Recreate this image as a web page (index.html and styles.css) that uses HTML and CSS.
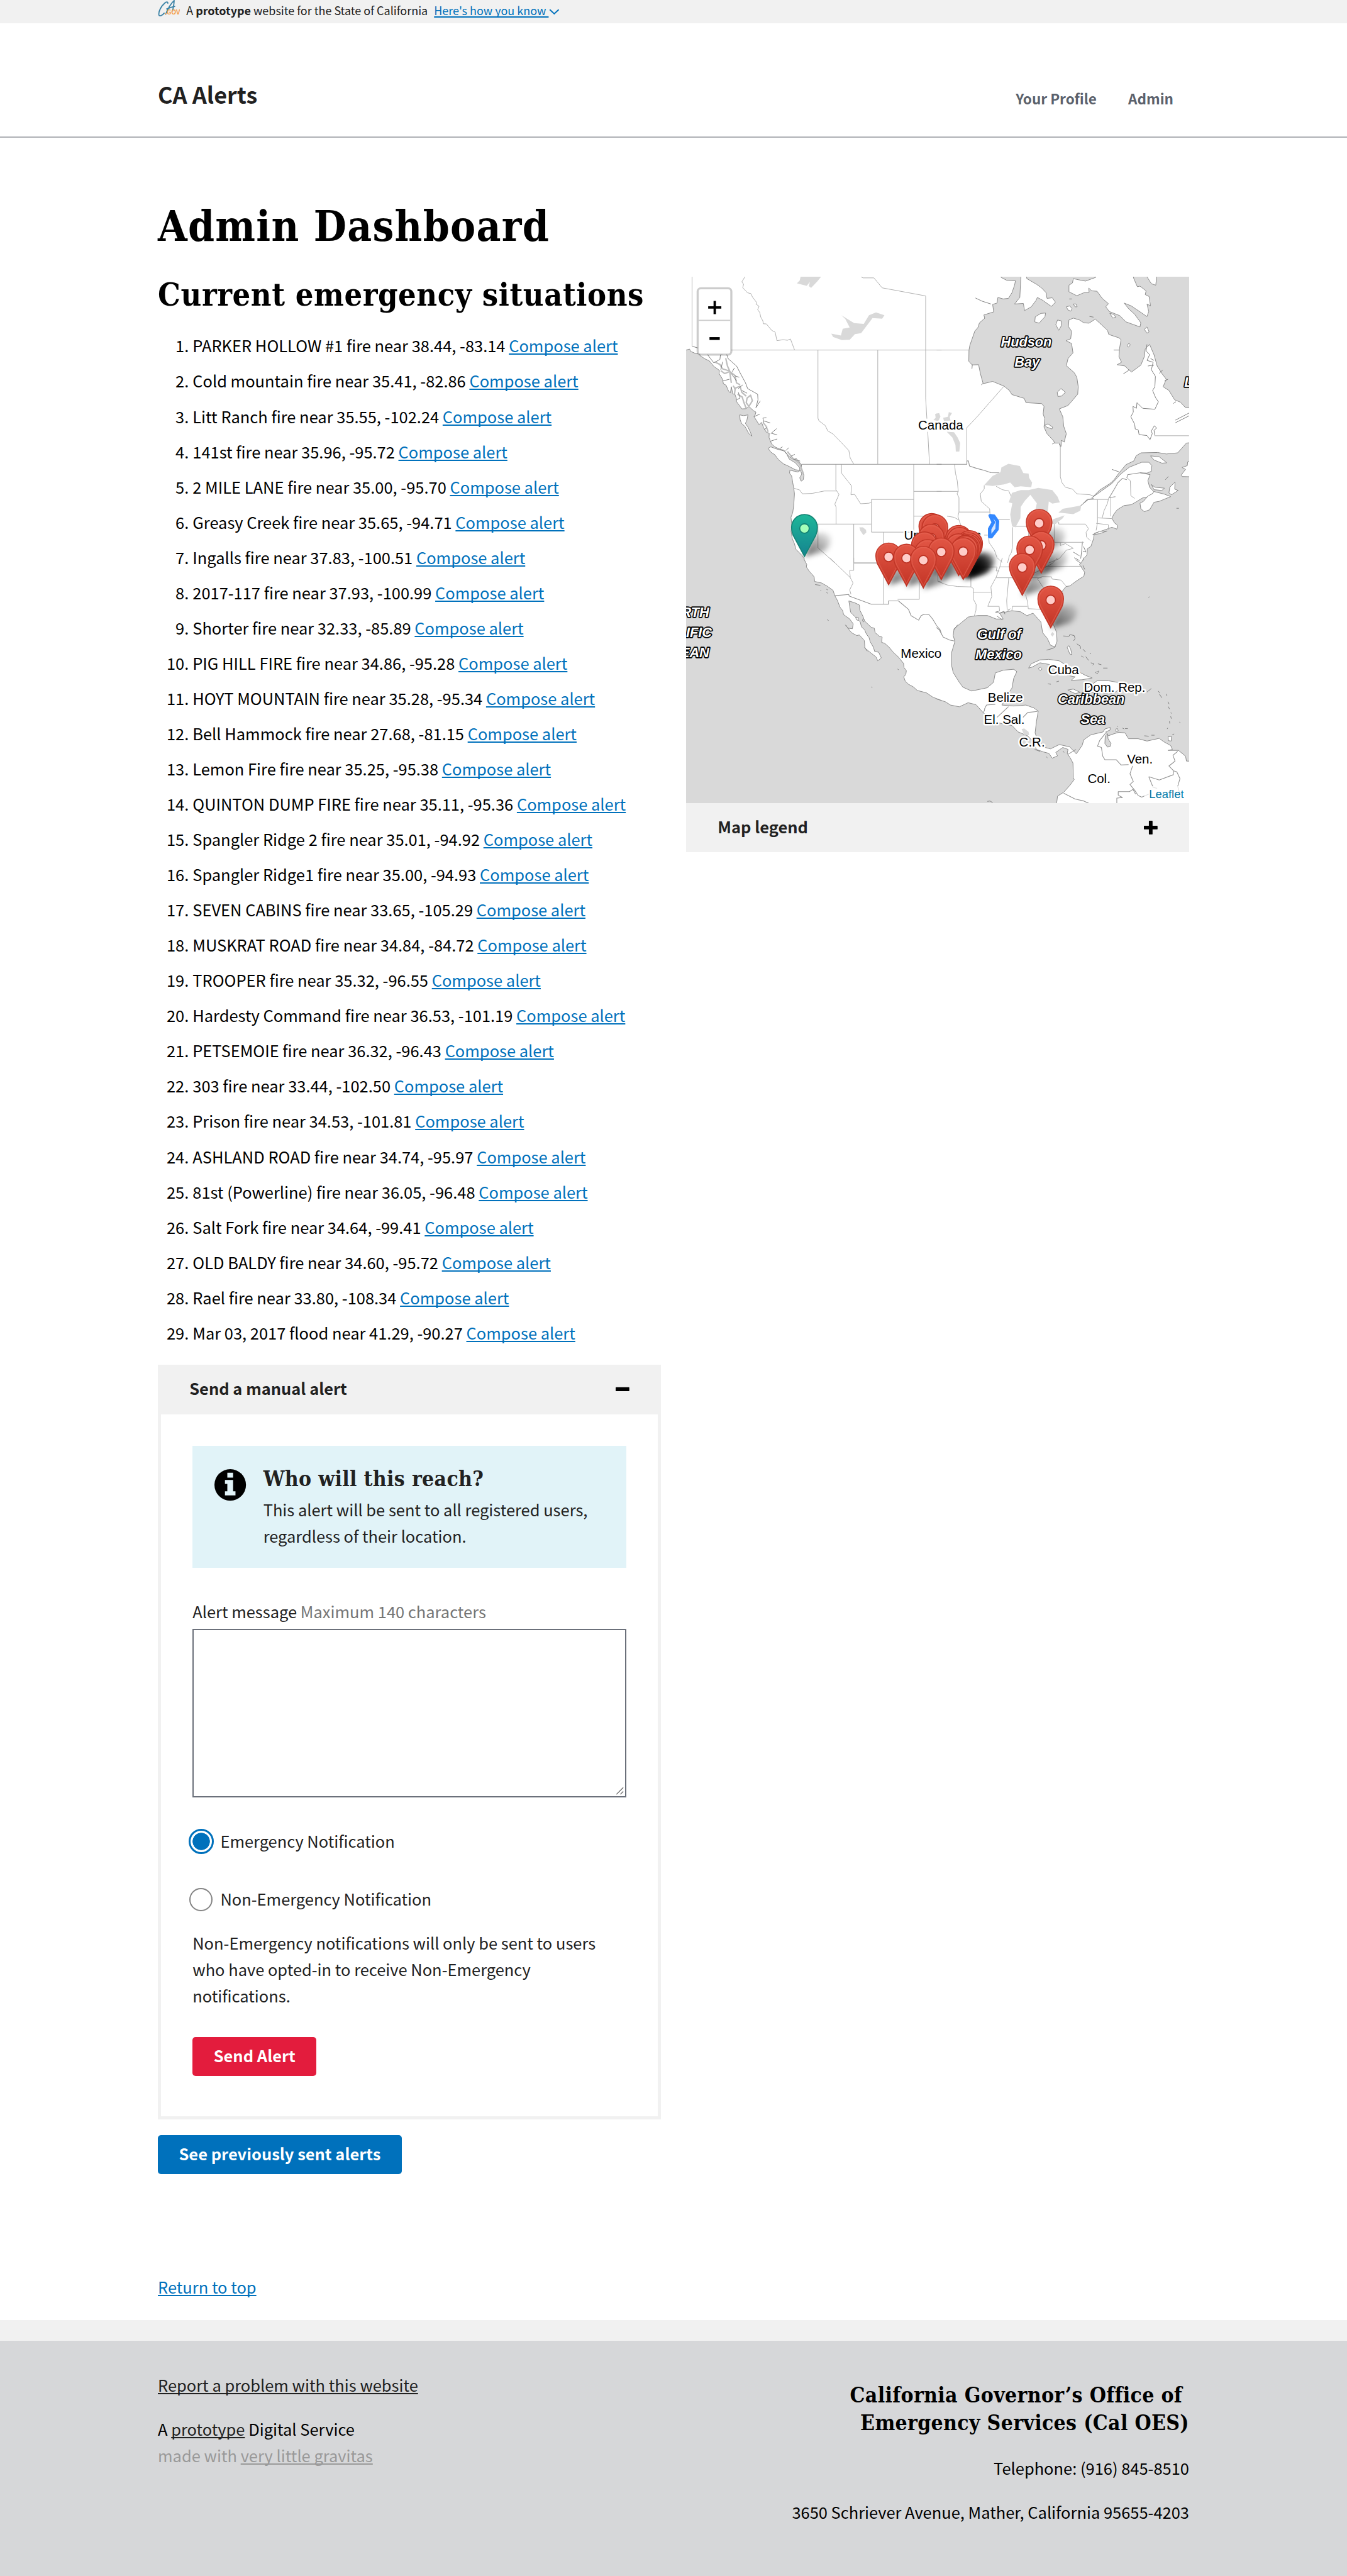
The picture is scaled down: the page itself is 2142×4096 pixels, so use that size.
FILE: index.html
```html
<!DOCTYPE html>
<html lang="en">
<head>
<meta charset="utf-8">
<title>CA Alerts - Admin Dashboard</title>
<link rel="stylesheet" href="styles.css">
</head>
<body>
<div class="banner">
  <div class="container banner-inner">
    <svg class="banner-logo" viewBox="0 0 42 32" aria-hidden="true">
      <path d="M19 6C19 3 16 3 13 6 6 12 1 22 2 28c1 4 6 2 10-3M31 1C25 6 18 18 15 27M31 1c0 8-2 14-3 20M17 17c5-2 9-4 15-5" fill="none" stroke="#3b82a6" stroke-width="2.2" stroke-linecap="round"/>
      <text x="13" y="28" class="logo-gov">.GOV</text>
    </svg>
    <span>A <strong>prototype</strong> website for the State of California</span>
    <a href="#" class="banner-link">Here's how you know </a>
    <svg class="banner-chevron" viewBox="0 0 20 12" aria-hidden="true"><path d="M1.500 1.500l8.500 8 8.500-8" fill="none" stroke="#0071bc" stroke-width="2.400"/></svg>
  </div>
</div>
<header class="header">
  <div class="container header-inner">
    <div class="site-title">CA Alerts</div>
    <nav class="nav"><a href="#">Your Profile</a><a href="#">Admin</a></nav>
  </div>
</header>
<main class="container main">
  <h1>Admin Dashboard</h1>
  <div class="columns">
    <section>
      <h2>Current emergency situations</h2>
      <ol class="events">
        <li>PARKER HOLLOW #1 fire near 38.44, -83.14 <a href="#">Compose alert</a></li>
        <li>Cold mountain fire near 35.41, -82.86 <a href="#">Compose alert</a></li>
        <li>Litt Ranch fire near 35.55, -102.24 <a href="#">Compose alert</a></li>
        <li>141st fire near 35.96, -95.72 <a href="#">Compose alert</a></li>
        <li>2 MILE LANE fire near 35.00, -95.70 <a href="#">Compose alert</a></li>
        <li>Greasy Creek fire near 35.65, -94.71 <a href="#">Compose alert</a></li>
        <li>Ingalls fire near 37.83, -100.51 <a href="#">Compose alert</a></li>
        <li>2017-117 fire near 37.93, -100.99 <a href="#">Compose alert</a></li>
        <li>Shorter fire near 32.33, -85.89 <a href="#">Compose alert</a></li>
        <li>PIG HILL FIRE fire near 34.86, -95.28 <a href="#">Compose alert</a></li>
        <li>HOYT MOUNTAIN fire near 35.28, -95.34 <a href="#">Compose alert</a></li>
        <li>Bell Hammock fire near 27.68, -81.15 <a href="#">Compose alert</a></li>
        <li>Lemon Fire fire near 35.25, -95.38 <a href="#">Compose alert</a></li>
        <li>QUINTON DUMP FIRE fire near 35.11, -95.36 <a href="#">Compose alert</a></li>
        <li>Spangler Ridge 2 fire near 35.01, -94.92 <a href="#">Compose alert</a></li>
        <li>Spangler Ridge1 fire near 35.00, -94.93 <a href="#">Compose alert</a></li>
        <li>SEVEN CABINS fire near 33.65, -105.29 <a href="#">Compose alert</a></li>
        <li>MUSKRAT ROAD fire near 34.84, -84.72 <a href="#">Compose alert</a></li>
        <li>TROOPER fire near 35.32, -96.55 <a href="#">Compose alert</a></li>
        <li>Hardesty Command fire near 36.53, -101.19 <a href="#">Compose alert</a></li>
        <li>PETSEMOIE fire near 36.32, -96.43 <a href="#">Compose alert</a></li>
        <li>303 fire near 33.44, -102.50 <a href="#">Compose alert</a></li>
        <li>Prison fire near 34.53, -101.81 <a href="#">Compose alert</a></li>
        <li>ASHLAND ROAD fire near 34.74, -95.97 <a href="#">Compose alert</a></li>
        <li>81st (Powerline) fire near 36.05, -96.48 <a href="#">Compose alert</a></li>
        <li>Salt Fork fire near 34.64, -99.41 <a href="#">Compose alert</a></li>
        <li>OLD BALDY fire near 34.60, -95.72 <a href="#">Compose alert</a></li>
        <li>Rael fire near 33.80, -108.34 <a href="#">Compose alert</a></li>
        <li>Mar 03, 2017 flood near 41.29, -90.27 <a href="#">Compose alert</a></li>
      </ol>
      <div class="accordion">
        <div class="accordion-head"><span>Send a manual alert</span>
          <svg class="toggle" viewBox="0 0 26 26" aria-hidden="true"><rect x="0" y="9.400" width="26" height="7.400" rx="1"/></svg>
        </div>
        <form class="accordion-body">
          <div class="info">
            <svg class="info-icon" viewBox="0 0 60 60" aria-hidden="true"><circle cx="30" cy="30" r="30"/><path d="M24.500 7h11v9h-11zM20 20.500h15.500V42H40v8H20v-8h4.500V28H20z" fill="#e1f3f8"/></svg>
            <div>
              <h3>Who will this reach?</h3>
              <p>This alert will be sent to all registered users, regardless of their location.</p>
            </div>
          </div>
          <label class="field-label" for="message">Alert message <span class="hint">Maximum 140 characters</span></label>
          <div class="message-wrap">
            <textarea id="message" class="message"></textarea>
            <svg class="grip" viewBox="0 0 16 16" aria-hidden="true"><path d="M1.500 14.500l13-13M9 14.500L14.500 9" fill="none" stroke="#666" stroke-width="1.500"/></svg>
          </div>
          <div class="choice choice-first"><span class="radio radio-on"></span><span>Emergency Notification</span></div>
          <div class="choice"><span class="radio radio-off"></span><span>Non-Emergency Notification</span></div>
          <p class="note">Non-Emergency notifications will only be sent to users who have opted-in to receive Non-Emergency notifications.</p>
          <button type="button" class="btn btn-red">Send Alert</button>
        </form>
      </div>
      <button type="button" class="btn btn-blue">See previously sent alerts</button>
    </section>
    <section>
      <svg class="map" viewBox="0 0 956 1000" role="img" aria-label="Map of current situations">
        <defs>
          <linearGradient id="red" x1="0" y1="0" x2="0" y2="1"><stop offset="0" stop-color="#e25645"/><stop offset="1" stop-color="#c23425"/></linearGradient>
          <linearGradient id="teal" x1="0" y1="0" x2="0" y2="1"><stop offset="0" stop-color="#1eb799"/><stop offset="1" stop-color="#15838f"/></linearGradient>
          <filter id="soft" x="-50%" y="-50%" width="200%" height="200%"><feGaussianBlur stdDeviation="5"/></filter>
          <linearGradient id="fade" x1="0" y1="1" x2="1" y2="0"><stop offset="0" stop-opacity=".65"/><stop offset="1" stop-opacity=".05"/></linearGradient>
          <path id="shadow" d="M0 0L14-36Q30-52 48-40 54-22 36-10Z" fill="url(#fade)" filter="url(#soft)"/>
          <g id="pin">
            <path d="M0-1L-21.500-41Q-24.500-48-24.500-56A24.500 24.500 0 0 1 24.500-56Q24.500-48 21.500-41Z" fill="url(#red)" stroke="#bf3526" stroke-width="1.600"/>
            <path d="M0-6L-19-42Q-22-48-22-56A22 22 0 0 1 22-56Q22-48 19-42Z" fill="none" stroke="#e8695a" stroke-opacity=".55" stroke-width="1.500"/>
            <circle cy="-54" r="9" fill="#ffcdc9" stroke="#bb3022" stroke-width="2"/>
          </g>
          <g id="pin-teal">
            <path d="M0-1L-21.500-41Q-24.500-48-24.500-56A24.500 24.500 0 0 1 24.500-56Q24.500-48 21.500-41Z" fill="url(#teal)" stroke="#148475" stroke-width="2"/>
            <circle cy="-54" r="9" fill="#a5ffb9" stroke="#127f72" stroke-width="2"/>
          </g>
        </defs>
        <rect width="956" height="1000" fill="#fff"/>

        <!-- north-west: Alaska panhandle to California -->
        <svg x="-14" y="-16" width="500" height="560" viewBox="0 0 1500 1568" preserveAspectRatio="none">
          <path class="sea" d="M-20 435L42 435 62 430 68 442 95 453 118 450 122 465 150 482 175 493 200 522 232 543 230 560 250 590 255 615 270 622 285 655 295 662 300 630 308 668 320 670 328 690 330 710 350 735 360 748 383 747 400 735 425 757 440 765 438 775 430 790 440 805 458 832 472 820 485 850 500 872 516 878 515 900 522 918 530 935 548 950 575 962 600 968 628 1000 655 1018 670 1012 700 1045 700 1065 706 1085 714 1100 710 1125 698 1133 690 1115 702 1095 694 1075 680 1084 660 1080 634 1074 632 1090 644 1105 650 1140 656 1170 660 1200 656 1260 650 1300 640 1325 645 1365 641 1400 648 1440 660 1465 668 1495 690 1515 710 1535 712 1560 714 1600 -20 1600Z"/>
          <path class="land" d="M510 958L525 950 560 962 600 972 617 990 630 1015 665 1035 690 1062 690 1075 665 1072 620 1050 600 1042 570 1020 548 992 525 978ZM348 780L370 784 395 780 388 812 380 825 395 845 405 865 418 893 400 880 378 842 358 825 350 805Z"/>
          <path class="fjord" d="M205 498L235 512 250 535 285 545 320 570 330 610 350 620M268 478L278 520 290 545 300 610M240 545L262 560 285 552M315 640L350 628 360 660 385 680M335 670L362 685 372 715 385 745M390 690L410 675 420 705 400 735 385 715ZM310 625L322 640 318 670M480 820L498 840 510 870M620 975L650 1010 690 1040 710 1090"/>
          <path class="coast" d="M155 448L200 503 235 485 238 460 270 450 283 482 330 520 352 560 380 608 393 640 450 670 452 700 440 742 465 706M428 790L462 776M485 820L480 797 500 795M485 812L522 823M525 880L558 853M530 878L562 887M524 920L562 908M575 960L592 950M610 970L628 955M640 1000L662 990M655 1015L692 1026M240 540L250 498M305 550L318 530M320 572L345 580M340 640L365 620M250 600L290 590M330 700L350 690 340 660M300 560L330 600M360 650L390 665M488 860L505 845M78 415L112 425"/>
          <path class="line" d="M76 0V415M378 45L360 72 370 85 365 103 392 130 412 135 420 152 445 183 440 190 458 202 450 220 462 235 468 260 480 280 482 295 500 296 530 330 550 340 560 385 595 380 620 383 637 376 660 433M290 435H1500M1040 45L1050 51H1113L1160 104 1408 147V690L1415 800M1420 870L1430 1043M794 435V798L800 812 835 836 850 865 880 882 935 935 970 970 978 1010 998 1042M1135 435V1042M896 1043V1178L914 1203 890 1255 897 1270V1361M656 1170L690 1180 705 1200 760 1198 830 1185H900M928 1043V1090L985 1157 982 1205 1003 1203 1037 1253 1085 1250 1099 1245M1099 1230H1340M1099 1230V1404H1500M1340 1043V1404M1340 1187H1500M1340 1319H1500M790 1361H1099M794 1361V1487L890 1568M998 1361V1568M1168 1404V1568M998 1567H1160"/>
          <path class="line border" d="M700 1043H1500"/>
          <path class="lake" d="M695 45H812L790 70 755 104 742 95 748 72 730 93 674 80 690 65ZM870 348L925 358 935 322 975 315 950 270 928 250 1000 292 1055 296 1085 250 1125 235 1173 250 1160 268 1105 265 1040 345 1005 350 975 380 930 382 880 365ZM1462 775L1485 770 1492 790 1480 812 1452 808 1465 795ZM1030 1378L1050 1378 1068 1392 1070 1405 1053 1420 1035 1395Z"/>
        </svg>

        <!-- north-east: Hudson Bay to New England -->
        <svg x="476" y="-16" width="500" height="560" viewBox="0 0 1500 1568" preserveAspectRatio="none">
          <path class="sea" d="M360 20L368 48 400 64 450 66 445 90 430 130 410 160 380 163 350 155 345 185 320 192 326 232 270 248 275 266 245 290 236 315 218 335 205 370 190 410 185 435 184 495 203 514 240 513 250 560 266 614 320 602 385 627 415 650 430 672 500 692 510 715 600 720 613 735 608 775 617 800 613 845 630 880 665 915 675 930 700 930 710 948 712 915 728 925 740 880 725 840 720 790 700 748 750 730 805 670 808 630 800 580 785 555 740 518 750 480 778 450 770 400 738 385 765 375 770 335 752 310 755 275 780 265 815 275 840 290 870 292 905 270 940 300 975 330 982 352 1040 370 1052 380 1043 430 1040 470 1055 500 1030 513 1075 520 1090 535 1112 552 1165 515 1185 470 1190 430 1215 405 1240 460 1258 520 1285 560 1310 590 1292 630 1325 650 1358 700 1390 712 1420 742 1480 740V20Z"/>
          <path class="sea" d="M1480 925L1425 930 1375 982 1310 988 1260 980 1165 982 1138 998 1125 1025 1080 1045 1040 1090 1010 1128 985 1148 930 1180 885 1222 940 1185 1000 1145 1050 1095 1100 1058 1170 1032 1210 1032 1228 1050 1225 1080 1200 1090 1160 1088 1218 1098 1205 1130 1215 1165 1240 1190 1210 1215 1175 1222 1140 1242 1110 1258 1070 1262 1030 1285 1010 1310 1000 1330 1015 1355 1032 1368 1028 1388 1000 1378 950 1395 900 1410 895 1440 880 1480 860 1492 858 1525 835 1550 828 1600H1480Z"/>
          <path class="land" d="M910 20L908 48 850 68 830 65 780 55 775 78 755 90 755 125 800 146 840 130 870 128 868 105 885 120 915 122 945 160 980 188 965 205 985 230 1045 252 1080 285 1160 312 1165 290 1130 245 1095 215 1070 185 1110 200 1150 225 1200 257 1210 230 1200 190 1220 200 1212 150 1190 140 1195 120 1160 95 1145 98 1125 55 1115 20ZM484 20L480 60 475 155 445 190 495 187 502 225 540 205 568 170 575 155 605 170 655 203 678 180 660 157 630 160 625 130 600 105 570 85 515 55 510 20ZM560 285L563 258 595 240 622 238 618 258 585 292ZM680 300L690 275 712 280 712 305 697 330ZM1205 20L1200 45 1225 82 1250 90 1258 20ZM740 205L760 200 773 215 765 228 750 222ZM780 190L795 190 802 205 790 205ZM988 240L1010 245 1022 260 1005 265ZM1185 325L1200 312 1212 338 1200 345ZM1087 410L1098 398 1105 408 1094 420ZM618 835L635 828 662 845 658 855 628 845ZM688 660L710 640 735 660 712 680 692 682ZM1220 998L1270 1003 1313 1035 1285 1037 1240 1020ZM1160 1250L1180 1240 1205 1212 1230 1200 1240 1188 1300 1202 1335 1215 1270 1240 1240 1245 1215 1285 1185 1295 1165 1280ZM1325 1195L1330 1165 1360 1138 1358 1175 1378 1182 1340 1205ZM1225 1150L1245 1165 1300 1170 1285 1182 1240 1178ZM1480 1018L1432 1030 1430 1050 1400 1060 1420 1070 1395 1100 1400 1108 1480 1110ZM890 1418L930 1400 972 1398 930 1412Z"/>
          <path class="coast" d="M222 158L260 175 310 190M1200 405L1195 440 1215 460 1200 490 1235 500 1225 540 1248 575 1245 630 1232 650 1250 690 1265 710 1245 750 1175 745 1143 715 1140 745 1120 735 1122 765 1108 790 1130 830 1133 855 1150 860 1155 885 1200 890 1217 912 1230 880 1225 865 1242 838 1255 850 1240 862 1245 890M1010 435H1042M1065 562L1100 540M1000 1070L1040 1083M1362 808L1440 770M1362 822L1440 785M202 535L204 512M255 620L266 612M660 935L675 928M700 935L708 952M1205 520L1240 515M1220 480L1240 490M1270 560L1290 540M1300 600L1320 590M1350 720L1365 710M757 163H772M872 256L895 260M1368 1277L1382 1277M1305 1125L1322 1108M832 1455L828 1500 822 1545M835 1505L852 1510 838 1480M780 1510L815 1530M785 1540L815 1555"/>
          <path class="line" d="M0 435H185M385 627L222 800 173 848V1025M706 940V1110L715 1140 735 1165 775 1175 800 1200 875 1205 895 1212M1243 891H1440M103 1043L108 1090 118 1130 124 1187H0M124 1187L117 1200 128 1220V1297H305M250 1200L272 1175 272 1155M250 1200L255 1240 285 1265 303 1280 305 1310M340 1160L375 1178 412 1185 428 1220M128 1297L122 1320 130 1345 140 1370M60 1319L100 1325 125 1338M345 1338H418M434 1378V1470L428 1510 415 1530 405 1568M297 1425L300 1460 330 1500 345 1540 375 1565M272 1420H292M434 1373H512M671 1360V1458H840M697 1350V1361H848L867 1385 853 1405 855 1430 878 1450M706 1460V1475L735 1465 780 1490 740 1500 700 1545 640 1568M918 1230V1350L910 1395M910 1357L980 1365V1390M918 1328L1000 1332M860 1230H980M945 1328L955 1290 975 1250 982 1220M994 1218V1320M1085 1115L1105 1130 1108 1210 1130 1225M525 1375V1430"/>
          <path class="line border" d="M0 1043H173V1025H182L188 1052 230 1065 270 1075 310 1087 357 1088M860 1230L838 1250M820 1265L865 1230 895 1225M1020 1215L985 1220 1020 1165 1035 1140 1060 1118 1085 1125M1085 1115L1090 1098 1160 1088"/>
          <path class="lake" d="M272 1153L320 1105 365 1085 370 1060 410 1040 475 1052 495 1090 525 1092 528 1115 545 1140 540 1165 480 1160 445 1165 420 1140 385 1150 320 1158ZM412 1245L430 1195 480 1180 525 1180 580 1168 660 1180 690 1215 703 1245 660 1252 640 1240 632 1320 555 1320 572 1250 535 1205 505 1235 480 1270 478 1330 450 1378 430 1370 420 1310 432 1250ZM695 1300L720 1280 825 1262 820 1290 780 1308ZM655 1360L665 1335 730 1315 720 1330 680 1360ZM0 770L22 785 15 805 0 812ZM38 795L65 790 70 765 88 770 75 790 80 810 42 812ZM58 870L100 872 120 900 135 930 130 975 110 975 108 940 90 900Z"/>
        </svg>

        <!-- south-west: California to Mexico -->
        <svg x="-14" y="534" width="500" height="580" viewBox="0 0 1500 1568" preserveAspectRatio="none">
          <path class="sea" d="M-20 -20H712L716 10 730 35 728 48 745 70 772 98 775 122 815 130 850 148 880 168 890 195 905 220 920 255 935 272 940 292 975 315 995 340 990 365 965 362 985 385 1015 400 1030 397 1058 425 1062 465 1090 485 1125 510 1135 530 1155 515 1140 485 1118 483 1110 460 1092 432 1085 410 1070 392 1060 370 1042 355 1035 330 1015 312 980 280 975 250 970 222 1005 232 1030 243 1033 270 1050 300 1060 325 1098 358 1115 362 1120 385 1142 402 1160 408 1157 435 1175 440 1200 460 1225 488 1250 508 1282 543 1285 565 1298 580 1295 600 1283 612 1292 635 1310 650 1340 665 1360 682 1412 694 1450 717 1500 734 1540 740V1600H-20Z"/>
          <path class="land" d="M1050 315L1058 318 1055 330 1048 325ZM1010 305L1025 308 1022 322 1012 318Z"/>
          <path class="coast" d="M778 138L808 142M808 168l5 2M842 162l8 4M842 178l8 5M848 316l6 8M952 350l6 0M1060 460L1075 480M1248 572l6 4M1098 664l6 2M950 345L968 365"/>
          <path class="line" d="M855 -5L978 102M978 102L994 130 975 165 982 188M998 -10V65H975L978 102M998 28H1130M1168 60V238M1372 60V214H1248M1478 80V120L1500 126"/>
          <path class="line border" d="M890 195L970 189 972 197 1098 239H1196V222H1253L1310 265 1325 298 1368 321 1382 298 1400 290 1428 293 1450 318 1470 348 1490 370 1500 395"/>
        </svg>

        <!-- south-east: Gulf of Mexico and Caribbean -->
        <svg x="476" y="534" width="500" height="580" viewBox="0 0 1500 1568" preserveAspectRatio="none">
          <path class="sea" d="M-40 718L0 726 50 740 80 757 130 766 180 745 225 755 265 795 330 845 430 862 465 895 520 915 545 940 570 985 610 998 640 1005 660 1030 690 1018 680 1000 720 975 750 985 745 1005 762 1028 778 1055 780 1130 785 1140 760 1170 725 1205 690 1225 685 1260V1600H-40Z"/>
          <path class="sea" d="M1480 -20H832L838 10 815 35 845 75 840 95 800 118 760 145 738 148 715 175 690 230 665 300 665 340 685 385 687 430 675 458 650 450 632 415 605 385 595 330 550 285 515 298 480 278 430 272 390 280 360 285 380 315 340 315 290 297 235 297 180 305 140 335 100 365 95 400 105 430 85 490 85 550 95 590 130 640 150 665 200 685 290 668 325 640 335 592 380 578 440 573 458 585 440 620 430 670 415 690 400 720 372 757 440 762 510 757 555 772 580 788 570 840 562 900 575 935 620 975 650 982 700 960 760 972 797 1008 830 965 840 935 880 910 950 895 960 880 990 872 990 885 965 895 980 915 1010 905 1040 897 1075 900 1095 930 1150 930 1200 942 1270 928 1295 945 1335 965 1345 985 1320 990 1380 990 1420 1020 1425 1045 1480 1045Z"/>
          <path class="land" d="M525 567L540 545 590 525 640 522 700 530 770 570 830 595 850 605 888 618 830 627 768 630 790 612 720 600 690 570 640 548 590 540 545 562ZM915 632L980 632 1030 640 1060 665 1020 690 980 700 930 690 870 692 840 685ZM748 680L780 675 820 692 790 698ZM580 570L592 563 602 572 590 580ZM905 590L925 582 918 595ZM745 460L755 452 765 470 772 498 760 495ZM1023 880L1032 878 1036 890 1023 893ZM1320 920L1340 918 1338 942 1322 940Z"/>
          <path class="coast" d="M723 402L755 404 760 395 785 400 790 415 782 427M800 442L820 455 822 468M835 470L850 485M825 505L838 512M850 508L868 528M880 540L898 545 890 552M920 545L940 550M950 567L975 567M875 490l6 4M635 648L652 650M683 638L698 634M628 475L665 465 680 455M1208 203l6-2M1200 690L1225 672M1265 685L1272 695M1270 700L1285 720M1310 700l4 10M1320 740l6 12M1322 765l6 12M1335 795l6 6M1335 815l4 12M1328 840l2 12M1315 880l4-6M1385 845l5 2M1185 915L1210 917M1225 912L1243 912M1345 908l10-2M1060 875L1070 880M1075 878l16 0M1030 865l4 4M290 1252L305 1250 320 1258M625 1022L632 1028M560 985L590 995M720 995L728 1000M338 280L360 285 385 275 390 290M345 300L375 320M835 40L845 60M793 10L825 30M408 270L420 262M120 345L100 370M335 280L355 275"/>
          <path class="line" d="M196 48H345L340 68H357M8 60V122L60 140 120 148 196 150 210 158V213L226 240 225 270 215 300M210 177H310M196 90V150M375 0L360 50 340 100 310 150 315 200 292 250H357L360 275M412 103L400 220 403 272M340 103H600M430 270L432 250H518M508 190L520 230 523 262 595 265M575 108L610 155 650 165M575 108L600 97 655 98 660 110 710 115 738 145M600 44H830M555 80L600 60 660 30 690 0M360 47H415"/>
          <path class="line border" d="M-20 345L15 370 38 408 75 423 103 428M345 820L375 795 410 765M272 780L285 757 335 753M493 820L520 795 575 790M268 795L275 780M965 900L930 940 918 968 940 975 948 1020 960 1038 1025 1038 1052 1065 1095 1063M1118 1070L1103 1110 1122 1150 1103 1165 1130 1195 1150 1222 1170 1230 1210 1215M1210 1125L1235 1180 1258 1185M1210 1125L1270 1142 1350 1115 1352 1095 1325 1070 1360 1045 1348 1015 1375 995M1352 1095L1370 1100 1388 1135 1375 1175 1385 1205M725 1210L790 1240 840 1250 868 1262M1028 1262V1235L1060 1232 1036 1220V1202L1100 1202 1120 1190 1135 1215M750 1010L795 985"/>
          <path class="lake" d="M650 395L660 382 672 392 662 405ZM485 880L500 877 525 895 528 912 500 910Z"/>
          <path class="sea" d="M962 915L975 905 978 930 995 955 990 970 975 973 960 955Z"/>
        </svg>

        <g class="country">
          <text x="441" y="290">Canada</text><text x="414" y="500">United States</text>
          <text x="408" y="724">Mexico</text><text x="688" y="755">Cuba</text>
          <text x="573.500" y="808.500">Belize</text><text x="566" y="850">El. Sal.</text><text x="633" y="893">C.R.</text>
          <text x="838" y="925">Ven.</text><text x="763" y="962">Col.</text>
        </g>
        <g class="water">
          <text x="646.500" y="133" text-anchor="middle">Hudson</text><text x="648" y="171.500" text-anchor="middle">Bay</text>
          <text x="947" y="209">L</text>
          <text x="44" y="646" text-anchor="end">RTH</text><text x="49" y="684.500" text-anchor="end">IFIC</text><text x="44" y="723" text-anchor="end">EAN</text>
          <text x="595" y="688.500" text-anchor="middle">Gulf of</text><text x="594" y="726.500" text-anchor="middle">Mexico</text>
          <text x="770" y="812" text-anchor="middle">Caribbean</text><text x="773" y="850" text-anchor="middle">Sea</text>
        </g>
        <g class="country"><text x="756" y="788.500">Dom. Rep.</text></g>

        <path d="M578 454l7 1 7 10-1 15-11 14-3 0v-15l7-12Z" fill="#3388ff" fill-opacity=".2" stroke="#3388ff" stroke-width="6.500" stroke-linejoin="round"/>

        <g>
          <use href="#shadow" x="225" y="532"/><use href="#shadow" x="385" y="586"/><use href="#shadow" x="419" y="589"/><use href="#shadow" x="451" y="593"/>
          <use href="#shadow" x="467" y="568"/><use href="#shadow" x="485" y="576"/><use href="#shadow" x="520" y="570"/><use href="#shadow" x="527" y="576"/><use href="#shadow" x="530" y="572"/><use href="#shadow" x="534" y="570"/><use href="#shadow" x="538" y="568"/><use href="#shadow" x="533" y="572"/><use href="#shadow" x="537" y="570"/>
          <use href="#shadow" x="639" y="606"/><use href="#shadow" x="671" y="522"/><use href="#shadow" x="653" y="573"/><use href="#shadow" x="675" y="564"/><use href="#shadow" x="693" y="668"/>
        </g>
        <g>
          <use href="#pin" x="671" y="522.500"/>
          <use href="#pin" x="467" y="530.500"/><use href="#pin" x="473" y="532.500"/><use href="#pin-teal" x="225" y="532.500"/>
          <use href="#pin" x="466" y="551"/><use href="#pin" x="518" y="553"/><use href="#pin" x="520" y="557"/><use href="#pin" x="675" y="564.500"/>
          <use href="#pin" x="539" y="563"/><use href="#pin" x="453" y="565.500"/><use href="#pin" x="537" y="567"/><use href="#pin" x="518" y="569"/>
          <use href="#pin" x="535" y="570"/><use href="#pin" x="532" y="572"/><use href="#pin" x="530" y="573"/><use href="#pin" x="653" y="573"/>
          <use href="#pin" x="526.700" y="576.500"/><use href="#pin" x="459" y="580"/><use href="#pin" x="485" y="577"/>
          <use href="#pin" x="385" y="586.500"/><use href="#pin" x="419" y="588.800"/><use href="#pin" x="451" y="592.800"/>
          <use href="#pin" x="639" y="606.500"/><use href="#pin" x="693" y="668.300"/>
        </g>

        <rect x="22" y="22" width="64" height="126" rx="6" fill="#fff" stroke="#000" stroke-opacity=".2" stroke-width="4"/>
        <path d="M24 83h60" stroke="#ccc" stroke-width="2"/>
        <path d="M42 58.500h25M54.500 46v25" stroke="#000" stroke-width="4.600"/><path d="M44.500 117.500h19.500" stroke="#000" stroke-width="5.400"/>
        <rect x="871" y="968" width="85" height="32" fill="#fff" fill-opacity=".7"/>
        <text x="880" y="991" class="credit">Leaflet</text>
      </svg>
      <div class="accordion-head"><span>Map legend</span>
        <svg class="toggle" viewBox="0 0 26 26" aria-hidden="true"><path d="M9.500 1q0-1 1-1h5q1 0 1 1v8.500H25q1 0 1 1v5q0 1-1 1h-8.500V25q0 1-1 1h-5q-1 0-1-1v-8.500H1q-1 0-1-1v-5q0-1 1-1h8.500z"/></svg>
      </div>
    </section>
  </div>
  <div class="return"><a href="#">Return to top</a></div>
</main>
<footer class="footer">
  <div class="container footer-inner">
    <div class="footer-left">
      <p><a href="#">Report a problem with this website</a></p>
      <p class="made">A <a href="#">prototype</a> Digital Service<br><span class="muted">made with <a href="#">very little gravitas</a></span></p>
    </div>
    <div class="footer-right">
      <h3>California Governor’s Office of&nbsp;<br>Emergency Services (Cal OES)</h3>
      <p>Telephone: (916) 845-8510</p>
      <p>3650 Schriever Avenue, Mather, California 95655-4203</p>
    </div>
  </div>
</footer>
</body>
</html>
```
FILE: styles.css
```css
/* 1rem = 10 layout pixels */
html { font-size: 16.734px; }
*, *::before { box-sizing: border-box; }
body {
  margin: 0;
  background: #fff;
  color: #212121;
  font-family: "Noto Sans CJK JP", "Open Sans", sans-serif;
  font-size: 1.522rem;
  line-height: 2.5rem;
}
h1, h2, h3, p, ol { margin: 0; padding: 0; }
h1, h2, h3 { font-family: "DejaVu Serif Condensed", "DejaVu Serif", serif; font-weight: 700; font-stretch: condensed; white-space: nowrap; }
a { color: #0071bc; text-underline-offset: .07em; text-decoration-thickness: 2px; text-decoration-skip-ink: none; }
.container { width: 98rem; margin: 0 auto; }

.banner { height: 2.2rem; background: #f1f1f1; font-size: 1.074rem; line-height: 2.02rem; }
.banner-inner { display: flex; align-items: flex-start; }
.banner-logo { width: 2.1rem; height: 1.6rem; margin-right: .6rem; }
.logo-gov { font: 700 12.5px "Noto Sans CJK JP", sans-serif; fill: #f5a04a; letter-spacing: -.3px; }
.banner-link { margin-left: .6rem; white-space: pre; text-underline-offset: .1em; }
.banner-chevron { width: 1rem; height: .6rem; margin: .83rem 0 0 .05rem; }

.header { height: 10.9rem; border-bottom: 2px solid #aeb0b5; }
.header-inner { display: flex; justify-content: space-between; }
.site-title { margin-top: 5.24rem; font-size: 2.149rem; line-height: 3rem; font-weight: 700; }
.nav { display: flex; gap: 3rem; margin: 6.17rem 1.5rem 0 0; font-size: 1.343rem; line-height: 2rem; font-weight: 700; }
.nav a { color: #5b616b; text-decoration: none; }

.main { padding-top: 5.8rem; color: #000; }
h1 { font-size: 4rem; line-height: 5.2rem; letter-spacing: .075rem; }
.columns { display: grid; grid-template-columns: 47.8rem 47.8rem; column-gap: 2.4rem; margin-top: 2.2rem; }
h2 { font-size: 3rem; line-height: 3.5rem; letter-spacing: .032rem; }

.events { margin-top: 1.78rem; padding-left: 3.3rem; list-style: none; counter-reset: event; }
.events li { margin-bottom: .85rem; white-space: nowrap; counter-increment: event; }
.events li::before { content: counter(event) "."; display: inline-block; width: 3.3rem; margin-left: -3.3rem; padding-right: .36rem; text-align: right; }

.accordion { margin-top: 1.82rem; }
.accordion-head { display: flex; justify-content: space-between; align-items: center; height: 4.7rem; padding: 0 3rem; background: #f1f1f1; color: #212121; font-weight: 700; }
.accordion-head span { padding-bottom: .25rem; }
.toggle { width: 1.3rem; height: 1.3rem; fill: #000; }
.accordion-body { padding: 3rem 3rem 3.8rem; border: .3rem solid #f1f1f1; border-top: 0; color: #212121; }
.info { display: flex; height: 11.6rem; padding: 1.88rem 0 0 2.1rem; background: #e1f3f8; }
.info-icon { flex: none; width: 3rem; height: 3rem; margin: .36rem 1.62rem 0 0; }
.info h3 { font-size: 2rem; line-height: 2.6rem; letter-spacing: .02rem; }
.info p { width: 32rem; margin-top: .31rem; }
.field-label { display: block; margin-top: 2.89rem; }
.hint { color: #757575; }
.message-wrap { position: relative; height: 16rem; margin-top: .41rem; }
.message { display: block; width: 100%; height: 100%; border: 2px solid #6b707a; background: #fff; resize: none; }
.grip { position: absolute; right: .2rem; bottom: .2rem; width: .8rem; height: .8rem; }
.choice { display: flex; align-items: center; gap: .64rem; height: 2.5rem; margin: 3.03rem 0 0 -.4rem; }
.choice-first { margin-top: 2.86rem; }
.radio { flex: none; width: 2.4rem; height: 2.4rem; border-radius: 50%; margin-top: .14rem; }
.radio-on { border: .2rem solid #0071bc; background: radial-gradient(circle, #0071bc 0 .8rem, #fff .84rem); }
.radio-off { width: 2.2rem; height: 2.2rem; margin: .14rem .1rem 0; border: 2px solid #858585; }
.note { margin-top: 1.7rem; white-space: normal; }
.btn { display: block; height: 3.7rem; padding: 0 2rem .2rem; border: 0; border-radius: .3rem; color: #fff; font: 700 1.522rem/3.5rem "Noto Sans CJK JP", "Open Sans", sans-serif; white-space: nowrap; }
.btn-red { margin-top: 2.71rem; background: #e31c3d; }
.btn-blue { margin-top: 1.5rem; background: #0071bc; }

.map { display: block; width: 47.8rem; height: 50rem; overflow: hidden; }
.sea, .land, .coast, .line, .fjord { vector-effect: non-scaling-stroke; stroke-linejoin: round; }
.sea { fill: #d9d9d9; stroke: #8c8c8c; stroke-width: 1; }
.land { fill: #fff; stroke: #8c8c8c; stroke-width: 1; }
.coast { fill: none; stroke: #808080; stroke-width: 1; }
.fjord { fill: none; stroke: #bdbdbd; stroke-width: 2.2; }
.line { fill: none; stroke: #b0b0b0; stroke-width: 1; }
.border { stroke: #939393; stroke-width: 1.1; }
.lake { fill: #d9d9d9; }
.country { font: 24.5px "Liberation Sans", Arial, sans-serif; fill: #000; stroke: #fff; stroke-width: 6px; stroke-linejoin: round; paint-order: stroke; }
.water { font: italic 700 26px "Liberation Sans", Arial, sans-serif; fill: #fff; stroke: #000; stroke-width: 4px; stroke-linejoin: round; paint-order: stroke; }
.credit { font: 22px "Liberation Sans", Arial, sans-serif; fill: #0078a8; }

.return { margin-top: 9.49rem; padding-bottom: 1.91rem; }

.footer { height: 24.3rem; border-top: 2rem solid #f1f1f1; background: #d6d7d9; color: #000; }
.footer-inner { display: flex; justify-content: space-between; }
.footer-left { padding-top: 2.89rem; }
.footer-left a { color: #212121; }
.made { margin-top: 1.7rem; }
.muted, .footer-left .muted a { color: #999; }
.footer-right { padding-top: 3.88rem; text-align: right; }
.footer-right h3 { font-size: 2rem; line-height: 2.6rem; letter-spacing: .02rem; }
.footer-right p { margin-top: 1.7rem; }
```
